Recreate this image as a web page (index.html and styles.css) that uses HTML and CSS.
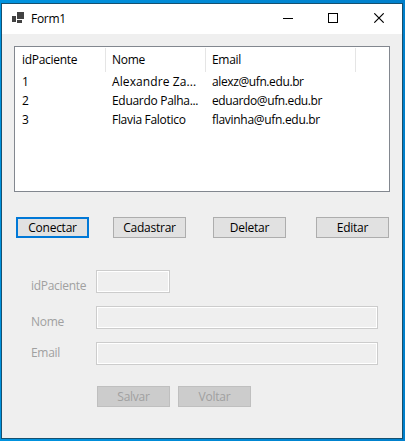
FILE: index.html
```html
<!DOCTYPE html>
<html lang="pt-BR">
<head>
<meta charset="utf-8">
<title>Form1</title>
<link rel="stylesheet" href="styles.css">
</head>
<body>
<main class="window">
  <header class="titlebar">
    <svg class="app-icon" width="12" height="11" viewBox="0 0 12 11" fill="#424242" shape-rendering="crispEdges"><path d="M5 0h7v7H5zM0 4h4v6H0zM5 8h5v3H5z"/></svg>
    <h1>Form1</h1>
    <svg class="controls" width="102" height="10" viewBox="0 0 102 10" fill="none" stroke="#000"><path d="M0 5.500h10M45.500 .5h9v9h-9z" shape-rendering="crispEdges"/><path d="M91.300 .3l9.400 9.400M100.700 .3l-9.400 9.400" stroke-width="1.100"/></svg>
  </header>
  <table class="patients">
    <colgroup><col class="col-id"><col class="col-name"><col class="col-email"><col></colgroup>
    <thead><tr><th>idPaciente</th><th>Nome</th><th>Email</th><th></th></tr></thead>
    <tbody>
      <tr><td>1</td><td class="loose">Alexandre Za...</td><td class="email">alexz@ufn.edu.br</td><td></td></tr>
      <tr><td>2</td><td>Eduardo Palha...</td><td class="email">eduardo@ufn.edu.br</td><td></td></tr>
      <tr><td>3</td><td>Flavia Falotico</td><td>flavinha@ufn.edu.br</td><td></td></tr>
    </tbody>
    <tfoot><tr><td colspan="4"></td></tr></tfoot>
  </table>
  <nav class="actions">
    <button class="focused">Conectar</button>
    <button>Cadastrar</button>
    <button>Deletar</button>
    <button>Editar</button>
  </nav>
  <form class="details">
    <label for="id">idPaciente</label><input id="id" class="short" disabled>
    <label for="nome">Nome</label><input id="nome" disabled>
    <label for="email" class="raised">Email</label><input id="email" disabled>
    <div class="form-actions"><button disabled>Salvar</button><button disabled>Voltar</button></div>
  </form>
</main>
</body>
</html>
```
FILE: styles.css
```css
* { box-sizing: border-box; }
body {
  margin: 0;
  width: 405px;
  height: 441px;
  padding: 3px 2px 2px 1px;
  overflow: hidden;
  background: linear-gradient(90deg, #0093df, #0080cc);
  font: 12px/19px "Open Sans", "Noto Sans", sans-serif;
  letter-spacing: -0.3px;
}
.window {
  width: 402px;
  height: 436px;
  border: 1px solid #16506f;
  background: #efefef;
}
.titlebar {
  display: flex;
  align-items: center;
  height: 30px;
  padding: 0 17px 0 10px;
  background: #fff;
}
.app-icon { margin-bottom: 3px; }
h1 {
  margin: 0 auto 1px 7px;
  font-size: 12px;
  font-weight: 400;
}
.controls { margin-bottom: 2px; }
.patients {
  width: 376px;
  height: 146px;
  margin: 12px 0 0 12px;
  border: 1px solid #82878f;
  border-spacing: 0;
  table-layout: fixed;
  background: #fff;
}
.col-id { width: 91px; }
.col-name { width: 100px; }
.col-email { width: 150px; }
.patients th,
.patients td {
  height: 19px;
  padding: 0 0 0 7px;
  white-space: nowrap;
  text-align: left;
  font-weight: 400;
}
.patients td + td,
.patients th + th { padding-left: 6px; }
.patients .loose { letter-spacing: 0.1px; }
.patients .email { letter-spacing: -0.39px; }
.patients thead tr { height: 25px; }
.patients th {
  height: 25px;
  background: linear-gradient(#e5e5e5, #e5e5e5) right bottom / 1px 24px no-repeat;
}
.patients th:last-child { background: none; }
.patients tbody tr { height: 19px; }
.patients tfoot td { height: 62px; }
button {
  width: 73px;
  height: 21px;
  padding: 0;
  border: 1px solid #adadad;
  background: #e1e1e1;
  color: #000;
  font: inherit;
  line-height: 19px;
  letter-spacing: -0.25px;
}
.focused { border: 2px solid #0078d7; line-height: 17px; }
.actions {
  display: grid;
  grid-template-columns: 97px 100px 103px 73px;
  margin: 25px 0 0 14px;
}
.details {
  display: grid;
  grid-template-columns: 65px 282px;
  row-gap: 13px;
  margin: 32px 0 0 29px;
}
label { padding-top: 6px; height: 23px; color: #a0a0a0; }
.raised { padding-top: 1px; }
input {
  width: 282px;
  height: 23px;
  border: 1px solid #ccc;
  box-shadow: inset 0 0 0 1px #fff;
  background: #efefef;
}
.short { width: 74px; }
.form-actions {
  grid-column: 2;
  display: flex;
  gap: 8px;
  margin: 8px 0 0 1px;
}
button:disabled {
  border-color: #bfbfbf;
  background: #ccc;
  color: #a0a0a0;
}
```
